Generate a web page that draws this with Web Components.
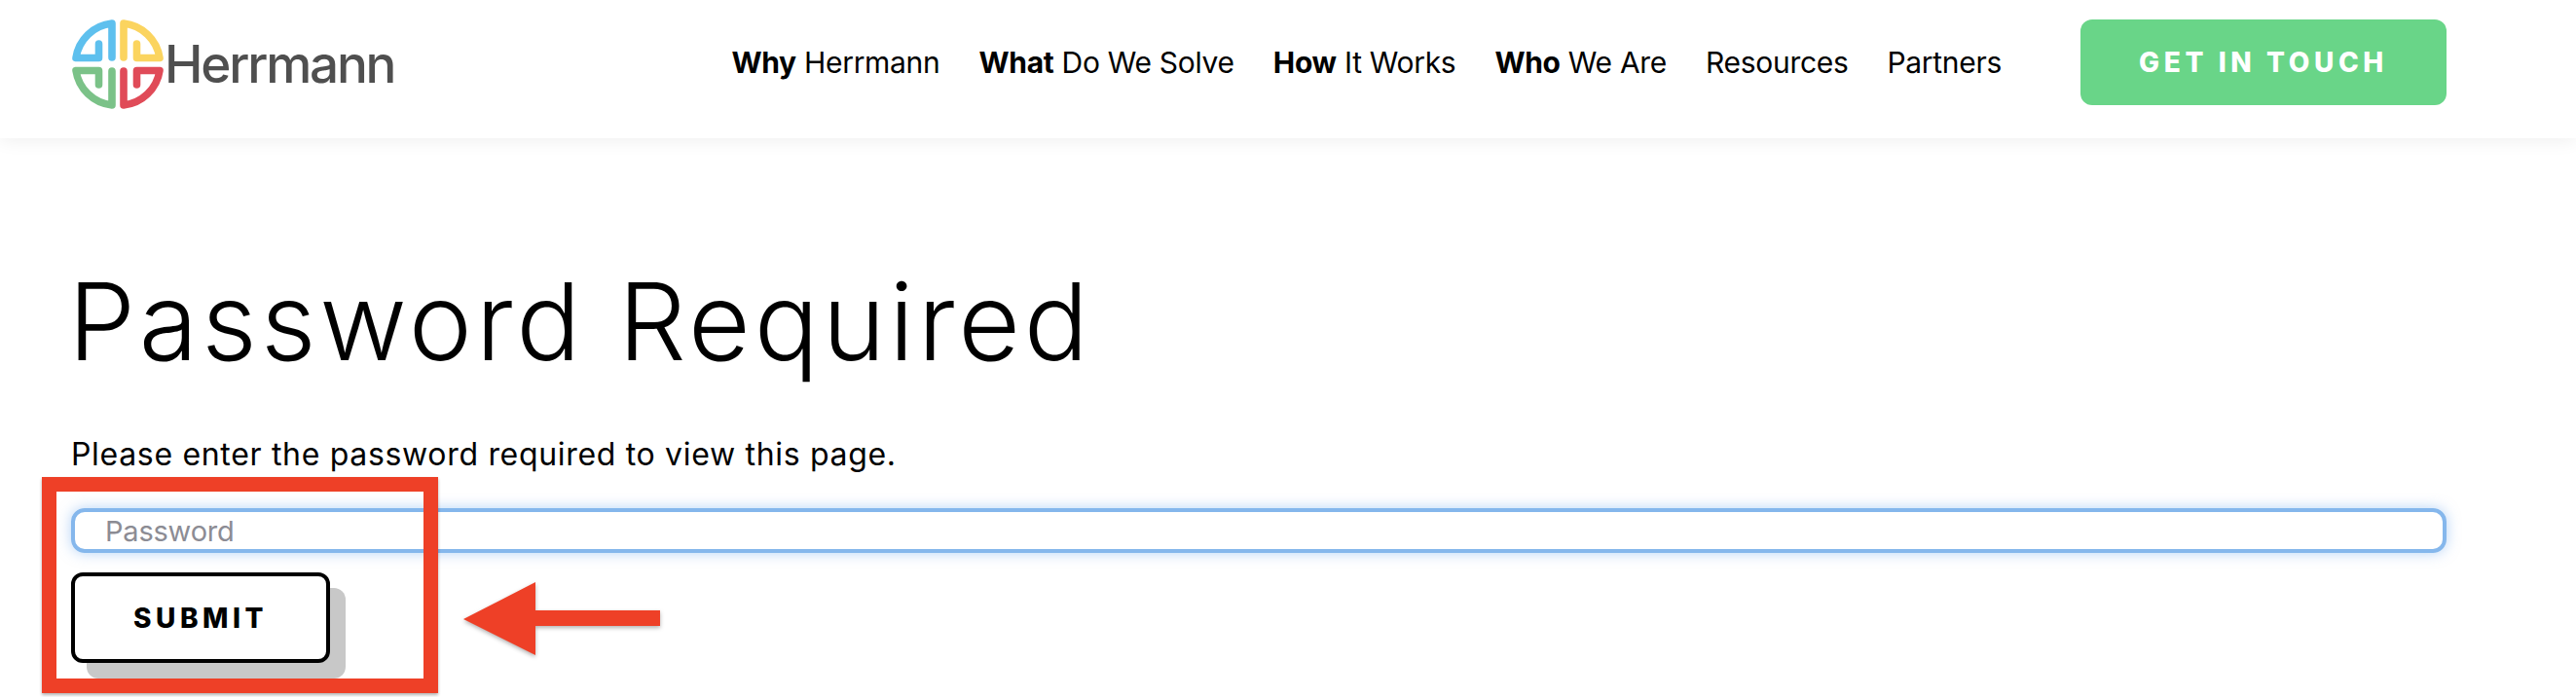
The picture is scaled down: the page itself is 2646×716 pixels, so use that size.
<!DOCTYPE html>
<html lang="en">
<head>
<meta charset="utf-8">
<title>Password Required</title>
<style>
html,body{margin:0;padding:0;background:#fff;overflow:hidden}
body{width:2646px;height:716px;position:relative;font-family:"Inter","Liberation Sans",sans-serif;color:#000}
</style>
</head>
<body>
<site-header>
  <nav-link strong="Why" rest="Herrmann"></nav-link>
  <nav-link strong="What" rest="Do We Solve"></nav-link>
  <nav-link strong="How" rest="It Works"></nav-link>
  <nav-link strong="Who" rest="We Are"></nav-link>
  <nav-link rest="Resources"></nav-link>
  <nav-link rest="Partners"></nav-link>
</site-header>
<password-page></password-page>
<red-callout></red-callout>
<script>
class HerrmannLogo extends HTMLElement{
  constructor(){super();this.attachShadow({mode:'open'}).innerHTML=`
  <style>
  :host{display:flex;align-items:center;gap:0}
  svg{display:block;width:96px;height:96px;flex:none;margin-top:3px}
  span{font:500 53px/1 "Inter","Liberation Sans",sans-serif;color:#4f4f4f;letter-spacing:-2.2px;margin-top:5px}
  </style>
  <svg viewBox="-48 -48 96 96" aria-hidden="true">
    <g fill="none" stroke-width="7.6" stroke-linecap="round" stroke-linejoin="round">
      <path stroke="#5ec0ee" d="M-6-7V-42A42 42 0 0 0-43-6.500H-19.500V-21"/>
      <path stroke="#fbd45f" d="M6-7V-42A42 42 0 0 1 43-6.500H19.500V-21"/>
      <path stroke="#7bc288" d="M-6 7V42A42 42 0 0 1-43 6.500H-19.500V21"/>
      <path stroke="#e04b58" d="M6 7V42A42 42 0 0 0 43 6.500H19.500V21"/>
    </g>
  </svg>
  <span>Herrmann</span>`}
}
customElements.define('herrmann-logo',HerrmannLogo);

class NavLink extends HTMLElement{
  constructor(){super();this.attachShadow({mode:'open'})}
  connectedCallback(){
    const s=this.getAttribute('strong'),r=this.getAttribute('rest');
    this.shadowRoot.innerHTML=`
    <style>
    :host{display:block;white-space:nowrap;font-size:30px;line-height:36px;letter-spacing:-.3px;color:#000}
    b{font-weight:700}
    </style>${s?`<b>${s}</b> `:''}${r}`;
  }
}
customElements.define('nav-link',NavLink);

class SiteHeader extends HTMLElement{
  constructor(){super();this.attachShadow({mode:'open'}).innerHTML=`
  <style>
  :host{display:flex;height:142px;box-sizing:border-box;padding:0 133px 14px 73px;align-items:center;background:#fff;box-shadow:0 2px 18px rgba(0,0,0,.07);position:relative}
  nav{display:flex;align-items:center;gap:40px;margin-left:auto}
  a{display:flex;align-items:center;justify-content:center;width:376px;height:88px;margin-left:81px;border-radius:12px;background:#69d588;color:#fff;font-weight:800;font-size:28px;letter-spacing:4.6px}
  </style>
  <herrmann-logo></herrmann-logo>
  <nav><slot></slot></nav>
  <a>GET IN TOUCH</a>`}
}
customElements.define('site-header',SiteHeader);

class PasswordForm extends HTMLElement{
  constructor(){super();this.attachShadow({mode:'open'}).innerHTML=`
  <style>
  :host{display:flex;flex-direction:column;align-items:flex-start}
  .field{box-sizing:border-box;width:2440px;height:46px;border:4px solid #85b7ec;border-radius:14px;box-shadow:0 0 14px rgba(110,170,240,.5);padding-left:31px;display:flex;align-items:center;font-size:29px;color:#8c8c94;letter-spacing:-.2px}
  button{all:unset;box-sizing:border-box;display:flex;align-items:center;justify-content:center;width:266px;height:93px;margin-top:20px;border:4px solid #000;border-radius:12px;background:#fff;box-shadow:16px 16px 0 #c8c8c8;font:800 28px "Inter",sans-serif;letter-spacing:4.5px;color:#000}
  </style>
  <div class="field">Password</div>
  <button>SUBMIT</button>`}
}
customElements.define('password-form',PasswordForm);

class PasswordPage extends HTMLElement{
  constructor(){super();this.attachShadow({mode:'open'}).innerHTML=`
  <style>
  :host{display:block;padding:0 73px}
  h1{margin:0 0 0 -3px;padding-top:122px;font-weight:300;font-size:110px;line-height:132px;letter-spacing:3.8px}
  p{margin:0;padding-top:51px;font-size:32px;line-height:40px;letter-spacing:.68px}
  password-form{margin-top:35px}
  </style>
  <h1>Password Required</h1>
  <p>Please enter the password required to view this page.</p>
  <password-form></password-form>`}
}
customElements.define('password-page',PasswordPage);

class RedCallout extends HTMLElement{
  constructor(){super();this.attachShadow({mode:'open'}).innerHTML=`
  <style>
  :host{position:absolute;left:0;top:0;width:2646px;height:716px;pointer-events:none}
  .frame{position:absolute;left:43px;top:490px;width:407px;height:222px;box-sizing:border-box;border:15px solid #ee4027;box-shadow:0 2px 3px rgba(0,0,0,.3)}
  svg{position:absolute;left:470px;top:590px;filter:drop-shadow(0 2px 2px rgba(0,0,0,.3))}
  </style>
  <div class="frame"></div>
  <svg width="215" height="90" viewBox="470 590 215 90" aria-hidden="true"><path fill="#ee4027" d="M476 636 550 598V627H678V643H550V673Z"/></svg>`}
}
customElements.define('red-callout',RedCallout);
</script>
</body>
</html>
